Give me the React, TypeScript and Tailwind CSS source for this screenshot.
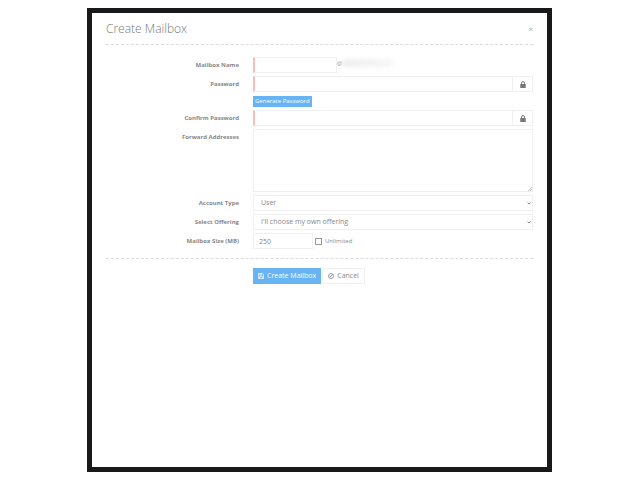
import { ReactNode } from "react";

const inputClass =
  "block h-4 w-full min-w-0 border border-[#f0f0f0] bg-white px-1 text-[7px] text-[#888] outline-none";
const requiredClass = "border-l-2 border-l-[#f9bcb8]";

const LockIcon = () => (
  <svg viewBox="0 0 12 14" className="h-[7px] w-[6px]" aria-hidden="true">
    <path d="M3 7V4.2a3 3 0 0 1 6 0V7" fill="none" stroke="#777" strokeWidth="2" />
    <rect x="0.5" y="6" width="11" height="8" rx="1" fill="#777" />
  </svg>
);

const SaveIcon = () => (
  <svg viewBox="0 0 14 14" className="h-[6px] w-[6px]" aria-hidden="true">
    <path
      d="M1 1h9l3 3v9H1zM4 1v4h5V1M3.5 13V8.5h7V13"
      fill="none"
      stroke="currentColor"
      strokeWidth="1.7"
    />
  </svg>
);

const BanIcon = () => (
  <svg viewBox="0 0 14 14" className="h-[6px] w-[6px]" aria-hidden="true">
    <circle cx="7" cy="7" r="5.7" fill="none" stroke="currentColor" strokeWidth="2" />
    <path d="M3 11 11 3" stroke="currentColor" strokeWidth="2" />
  </svg>
);

const Row = ({
  id,
  label,
  children,
}: {
  id: string;
  label: string;
  children: ReactNode;
}) => (
  <div className="grid grid-cols-[minmax(0,133fr)_minmax(0,280fr)] gap-x-[14px]">
    <label
      htmlFor={id}
      className="h-4 whitespace-nowrap text-right text-[6px] font-bold leading-4 text-[#888]"
    >
      {label}
    </label>
    <div className="min-w-0">{children}</div>
  </div>
);

const PasswordInput = ({ id }: { id: string }) => (
  <div className="flex">
    <input id={id} type="password" className={inputClass + " " + requiredClass} />
    <span className="flex h-4 w-5 shrink-0 items-center justify-center border border-l-0 border-[#f0f0f0]">
      <LockIcon />
    </span>
  </div>
);

const SelectInput = ({ id, options }: { id: string; options: string[] }) => (
  <div className="relative">
    <select
      id={id}
      className="block h-4 w-full appearance-none border border-[#f0f0f0] bg-white pl-[7px] pr-3 text-[7px] leading-[14px] text-[#888] outline-none"
    >
      {options.map((option) => (
        <option key={option}>{option}</option>
      ))}
    </select>
    <svg
      viewBox="0 0 8 6"
      className="pointer-events-none absolute right-[2px] top-[7px] h-[3px] w-1"
      aria-hidden="true"
    >
      <path d="M1 1l3 3 3-3" fill="none" stroke="#888" strokeWidth="2" />
    </svg>
  </div>
);

const App = () => {
  return (
    <div className="flex min-h-screen bg-white pl-[87px] pr-[88px] py-2 font-['Open_Sans',sans-serif]">
      <main className="min-w-0 flex-1 border-[5px] border-[#17191a] bg-white px-[14px]">
        {/* Header */}
        <header className="flex h-8 items-center justify-between border-b border-dashed border-[#dcdcdc]">
          <h1 className="text-[12px] font-light leading-4 text-[#777]">
            Create Mailbox
          </h1>
          <button
            type="button"
            aria-label="Close"
            className="text-[8px] leading-4 text-[#aaa]"
          >
            ×
          </button>
        </header>

        <form onSubmit={(e) => e.preventDefault()}>
          <div className="flex flex-col gap-[3px] border-b border-dashed border-[#dcdcdc] pb-[9px] pt-3">
            <Row id="name" label="Mailbox Name">
              <div className="flex">
                <div className="w-[84px]">
                  <input id="name" className={inputClass + " " + requiredClass} />
                </div>
                {/* Redacted domain */}
                <div className="flex h-3 items-center text-[6px] text-[#999]">
                  @
                  <span className="h-2 w-13 rounded-full bg-linear-to-r from-[#ededed] to-[#f7f7f7] blur-[2px]" />
                </div>
              </div>
            </Row>

            <Row id="password" label="Password">
              <PasswordInput id="password" />
              <button
                type="button"
                className="mt-1 block h-[11px] whitespace-nowrap bg-[#67b3f3] px-[2px] text-[6px] leading-[11px] text-white"
              >
                Generate Password
              </button>
            </Row>

            <Row id="confirm" label="Confirm Password">
              <PasswordInput id="confirm" />
            </Row>

            <Row id="forward" label="Forward Addresses">
              <div className="relative">
                <textarea
                  id="forward"
                  className="block h-[63px] w-full resize-none border border-[#f0f0f0] bg-white px-1 text-[7px] text-[#888] outline-none"
                />
                <svg
                  viewBox="0 0 8 8"
                  className="pointer-events-none absolute bottom-px right-px h-1 w-1"
                  aria-hidden="true"
                >
                  <path d="M0 8 8 0M4 8l4-4" stroke="#999" strokeWidth="1.2" />
                </svg>
              </div>
            </Row>

            <Row id="account" label="Account Type">
              <SelectInput id="account" options={["User"]} />
            </Row>

            <Row id="offering" label="Select Offering">
              <SelectInput
                id="offering"
                options={["I'll choose my own offering"]}
              />
            </Row>

            <Row id="size" label="Mailbox Size (MB)">
              <div className="flex">
                <div className="w-[60px]">
                  <input
                    id="size"
                    defaultValue="250"
                    className={inputClass + " pl-[5px]"}
                  />
                </div>
                <label className="flex h-4 items-center gap-[3px] pl-[2px] text-[6px] text-[#888]">
                  <input
                    type="checkbox"
                    className="h-[7px] w-[7px] appearance-none border border-[#999] bg-white checked:bg-[#67b3f3]"
                  />
                  Unlimited
                </label>
              </div>
            </Row>
          </div>

          {/* Actions */}
          <div className="grid grid-cols-[minmax(0,133fr)_minmax(0,280fr)] gap-x-[14px] pt-[9px]">
            <div className="col-start-2 flex gap-px">
              <button
                type="submit"
                className="flex h-4 items-center gap-[3px] whitespace-nowrap bg-[#67b3f3] px-[5px] text-[7px] text-white"
              >
                <SaveIcon />
                Create Mailbox
              </button>
              <button
                type="button"
                className="flex h-4 items-center gap-[3px] whitespace-nowrap border border-[#f0f0f0] bg-white px-[5px] text-[7px] text-[#888]"
              >
                <BanIcon />
                Cancel
              </button>
            </div>
          </div>
        </form>
      </main>
    </div>
  );
};

export default App;
